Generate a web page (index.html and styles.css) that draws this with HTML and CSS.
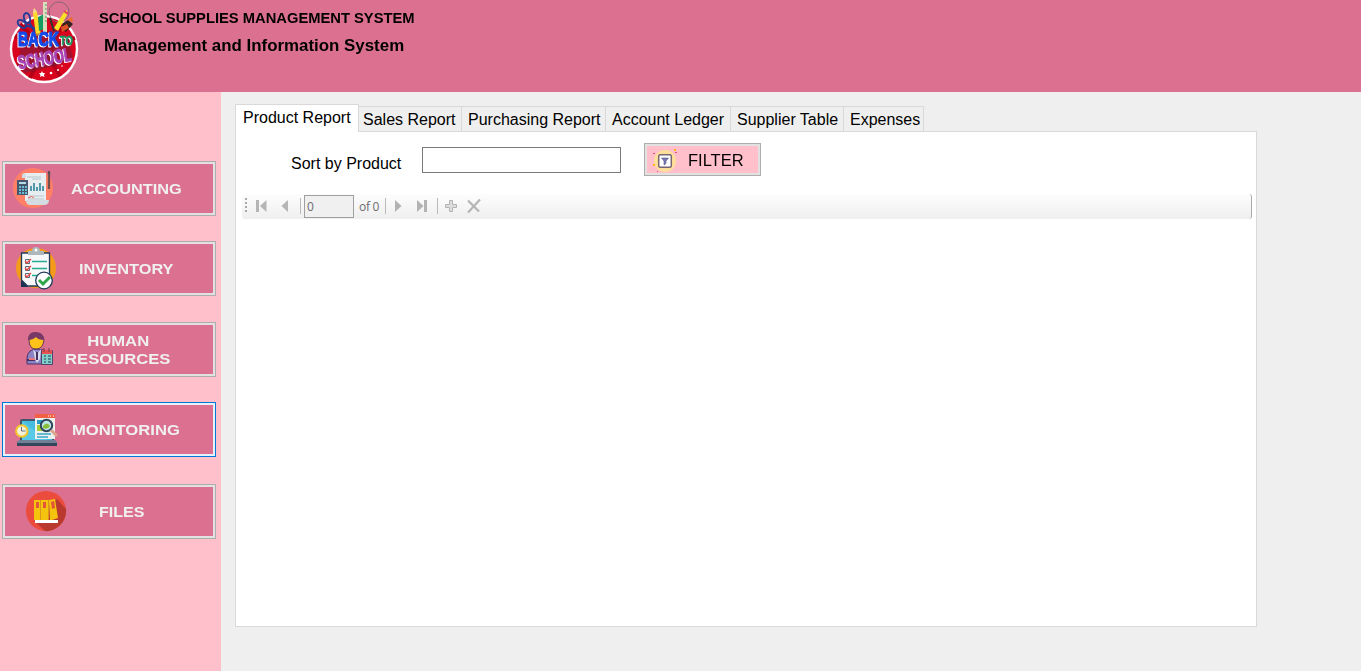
FILE: index.html
```html
<!DOCTYPE html>
<html lang="en">
<head>
<meta charset="utf-8">
<title>School Supplies Management System</title>
<link rel="stylesheet" href="styles.css">
</head>
<body>
<header class="header">
  <svg class="logo" viewBox="0 0 80 86" width="80" height="86">
    <circle cx="39" cy="49" r="33" fill="#d9051f" stroke="#fff" stroke-width="2.4"/>
    <path d="M39 49L10 36M39 49L15 24M39 49L60 24M39 49L70 38M39 49L25 78M39 49L55 76" stroke="#b60018" stroke-width="4"/>
    <g fill="none" stroke="#263c98" stroke-width="2"><ellipse cx="17" cy="24" rx="3" ry="5" transform="rotate(-50 17 24)"/><ellipse cx="22" cy="18" rx="3" ry="5" transform="rotate(-15 22 18)"/><path d="M20 25l12 4M24 22l6 10"/></g>
    <path d="M28 13l1-5 3 4 4 23-5 1z" fill="#ffd928"/><path d="M28 13l1-5 3 4z" fill="#f5d4a0"/>
    <path d="M33 17l6-3 3 14-8 3z" fill="#169b62"/><path d="M38 2h4v30h-4z" fill="#d9dfbd"/><path d="M40 5h2M40 9h2M40 13h2M40 17h2M40 21h2" stroke="#687"/>
    <circle cx="54" cy="12" r="10" fill="none" stroke="#8b6578" stroke-width="1"/><path d="M45 18l4 13" stroke="#333" stroke-width="2"/>
    <path d="M59 12l3-2 0 5-9 16-4-3z" fill="#f8e126"/><path d="M59 11l4 3" stroke="#e34261" stroke-width="2"/>
    <path d="M58 23l5-3 5 4-7 8-5-3z" fill="#38231f"/><path d="M62 20l5-3 1 5z" fill="#f06a25"/><path d="M56 27l6-3 2 4-7 4z" fill="#de5124"/>
    <path d="M14 37l38-7 1 12 14-5-2 10 3 10-14 8-34 8-8-7 3-12z" fill="#5a2440" opacity=".45"/>
    <g class="logo-word">
      <text class="logo-back" x="13" y="46" textLength="41" lengthAdjust="spacingAndGlyphs">BACK</text>
      <text class="logo-to" x="55" y="45" textLength="13" lengthAdjust="spacingAndGlyphs">TO</text>
      <text class="logo-school" x="14" y="69" textLength="54" lengthAdjust="spacingAndGlyphs" transform="rotate(-9 14 69)">SCHOOL</text>
    </g>
    <g fill="#fff"><path d="M37 71l1 2h2l-1 2 .5 2-2.500-1-2 1 .5-2-1.500-2h2z"/><circle cx="46" cy="73" r="1.300"/><circle cx="53" cy="70" r="1"/><circle cx="57" cy="66" r=".8"/></g>
  </svg>
  <div class="titles">
    <h1 class="title">SCHOOL SUPPLIES MANAGEMENT SYSTEM</h1>
    <h2 class="subtitle">Management and Information System</h2>
  </div>
</header>
<div class="body">
  <nav class="sidebar">
    <button class="nav accounting">
      <svg class="nav-icon" width="44" height="44" viewBox="0 0 44 44"><circle cx="22" cy="22" r="20" fill="#ff8067"/><path d="M14 7h21v28H14z" fill="#e8edef"/><path d="M14 7q-4 0-3 5h4zM15 34h23q0 5-5 5H19q-4 0-4-5" fill="#d3dce0"/><path d="M16 11h14M21 13h9M17 30h16M17 33h16" stroke="#b7c6cd"/><path d="M20 25v-5M23 25v-8M26 25v-4M29 25v-8M32 25v-5" stroke="#2e829a" stroke-width="1.600"/><path d="M17 32q4-3 6 0" stroke="#f35d50" fill="none"/><path d="M6 14h11v15H6z" fill="#46566c"/><path d="M8 16h7v2H8z" fill="#b6dce4"/><g fill="#67bdd2"><path d="M8 20h2v2H8zM11 20h2v2h-2zM14 20h2v2h-2zM8 23h2v2H8zM11 23h2v2h-2zM14 23h2v2h-2zM8 26h2v2H8zM11 26h2v2h-2zM14 26h2v2h-2z"/></g><path d="M38 5v18" stroke="#76504e" stroke-width="2.300"/><path d="M37 7h2" stroke="#344960"/></svg>
      <span class="label">ACCOUNTING</span>
    </button>
    <button class="nav inventory">
      <svg class="nav-icon" width="44" height="44" viewBox="0 0 44 44"><circle cx="23" cy="22" r="20" fill="#f49b1a"/><path d="M8.500 7h28v33h-22l-6-6z" fill="#f7f8fa" stroke="#203b5c" stroke-width="1.300"/><path d="M8 34l7 7H8z" fill="#173253"/><path d="M15 9V5h4q0-4 4-4t4 4h4v4z" fill="#adb7bd"/><circle cx="23" cy="4" r="1.500" fill="#fff"/><path d="M19 15.500h15M19 22.500h15M19 29.500h9" stroke="#24ad91" stroke-width="1.500"/><g fill="#e5eaec" stroke="#526a7b"><path d="M12.500 13.500h4v4h-4zM12.500 20.500h4v4h-4zM12.500 27.500h4v4h-4z"/></g><path d="M12 15l2 2 4-4M12 22l2 2 4-4M12 29l2 2 4-4" fill="none" stroke="#ed4c45" stroke-width="1.400"/><circle cx="31" cy="34.500" r="8.300" fill="#fff" stroke="#203b5c" stroke-width="1.300"/><path d="M26 34l4 4 7-7" fill="none" stroke="#2fa54c" stroke-width="3"/></svg>
      <span class="label">INVENTORY</span>
    </button>
    <button class="nav human">
      <svg class="nav-icon" width="30" height="36" viewBox="0 0 30 36"><path d="M2 33q-1-12 5-14l5-1 7 1 4 5v9z" fill="#8b83c4" stroke="#4a356b"/><path d="M4 9q0-7 7-7t8 7q-1 9-8 9T4 9" fill="#ffc21b" stroke="#633957"/><path d="M3 9q0-8 7-8 9 0 9 8-6 0-8-3-3 3-8 3" fill="#793967"/><path d="M8 18l4 5 4-5-1 10-3 4-2-4z" fill="#d9dced"/><path d="M12 21v8M2 29h8" stroke="#46305d" stroke-width="2"/><path d="M4 28h6" stroke="#e97777" stroke-width="2"/><path d="M16.500 19.500h11v14h-11z" fill="#80d1ca" stroke="#56416c"/><path d="M17 19h10v4H17z" fill="#e6534f"/><path d="M19 17v4M24 17v4" stroke="#753753"/><path d="M19 25h2M23 25h3M19 28h2M23 28h3M19 31h2M23 31h3" stroke="#446b80" stroke-width="1.300"/></svg>
      <span class="label two"><span class="line first">HUMAN</span><span class="line second">RESOURCES</span></span>
    </button>
    <button class="nav monitoring focused">
      <svg class="nav-icon" width="44" height="36" viewBox="0 0 44 36"><rect x="5" y="7" width="34" height="24" rx="2" fill="#44546a"/><path d="M7 9h30v19H7z" fill="#45bce0"/><path d="M7 9l25 19H7z" fill="#59c9e8"/><path d="M4 28h36l3 3H1z" fill="#718096"/><path d="M2 31h40v3H2z" fill="#34465c"/><path d="M20 2h20v25H20z" fill="#eef0ed"/><path d="M20 2h20v4H20z" fill="#f16045"/><path d="M33 4h1M35 4h1M38 4h1" stroke="#fff"/><path d="M22 8h5v4h-5z" fill="#249dc6"/><path d="M22 13h10v6H22z" fill="#a6cd33"/><path d="M22 22h14M22 25h11" stroke="#39a7c7" stroke-width="1.600"/><circle cx="31.500" cy="13.500" r="5.700" fill="#bde5e4" stroke="#30465b" stroke-width="2"/><path d="M28 14q4-5 7 0-2 4-7 2z" fill="#88bd3a"/><path d="M36 18l6 6" stroke="#dba58b" stroke-width="3"/><circle cx="6.800" cy="19" r="5.700" fill="#f4f2df" stroke="#f5c62b" stroke-width="2"/><path d="M6.500 15v4h4" fill="none" stroke="#697080"/></svg>
      <span class="label">MONITORING</span>
    </button>
    <button class="nav files">
      <svg class="nav-icon" width="44" height="44" viewBox="0 0 44 44"><circle cx="22" cy="22" r="20" fill="#ec4c3d"/><path d="M33 10l9 10q1 10-7 17-7 6-14 5L10 32z" fill="#ba392e"/><g fill="#f3c30d"><path d="M10 11h6v20h-6zM17 11h7v20h-7zM25 11l6-1 3 19-6 2h-2z"/></g><path d="M16.500 11v20M24.500 11v20" stroke="#dc941b"/><path d="M12 13h3v6h-3zM19 13h3v6h-3zM27 13l3-1 1 7-3 1z" fill="#e45439"/><path d="M11 31h23v3H11z" fill="#fff"/></svg>
      <span class="label">FILES</span>
    </button>
  </nav>
  <main class="content">
    <div class="tabs">
      <div class="tab active">Product Report</div><div class="tab sales">Sales Report</div><div class="tab purchasing">Purchasing Report</div><div class="tab ledger">Account Ledger</div><div class="tab supplier">Supplier Table</div><div class="tab expenses">Expenses</div>
    </div>
    <section class="panel">
      <div class="filters">
        <label class="sort" for="product">Sort by Product</label>
        <input class="product" id="product">
        <button class="filter">
          <svg class="filter-icon" width="26" height="26" viewBox="0 0 26 26"><circle cx="13" cy="13" r="11" fill="#ffdf99"/><rect x="6.700" y="6.700" width="12.600" height="12.600" rx="1.500" fill="#fff" stroke="#756575" stroke-width="1.500"/><path d="M9.500 10h7L14 13v2.500L12 17v-4z" fill="#7778b9" stroke="#625c82" stroke-width=".6"/><path d="M22 1h2v2h-2zM1 16h2v2H1z" fill="#ffb719"/><path d="M1 5h2v1H1zM23 4h2v1h-2zM5 23h1v1H5z" fill="#ee4d78"/></svg>
          <span class="filter-label">FILTER</span>
        </button>
      </div>
      <div class="toolbar">
        <svg class="tools" width="62" height="25" viewBox="0 0 62 25"><path d="M4 4v15" stroke="#a8a8a8" stroke-width="2" stroke-dasharray="2 2"/><path d="M14 6h3v12h-3zM24.500 6v12l-6.500-6zM46 6v12l-6.500-6z" fill="#b5b5b5"/><path d="M58.500 4v16" stroke="#b9b9b9"/></svg>
        <input class="page" value="0" aria-label="Page">
        <span class="count">of 0</span>
        <svg class="tools" width="110" height="25" viewBox="0 0 110 25"><path d="M3.500 4v16M55.500 4v16" stroke="#b9b9b9"/><path d="M13 6v12l6.500-6zM35 6v12l6.500-6zM42 6h3v12h-3z" fill="#b3b3b3"/><path d="M67.500 6.500h3v4h4v3h-4v4h-3v-4h-4v-3h4z" fill="#ddd" stroke="#b3b3b3"/><path d="M86 6.500l11 11M98 5.500l-12 13" stroke="#b5b5b5" stroke-width="2.200"/></svg>
      </div>
    </section>
  </main>
</div>
</body>
</html>
```

FILE: styles.css
```css
* { box-sizing: border-box; }
body { margin: 0; height: 671px; overflow: hidden; background: #efefef; color: #000; font-family: "Liberation Sans", Arial, sans-serif; }
button, input { margin: 0; font-family: inherit; border-radius: 0; }
.header { display: flex; height: 92px; padding-left: 5px; background: #db7090; }
.logo { display: block; flex: none; overflow: visible; }
.logo-word { font-family: "Liberation Sans", sans-serif; font-weight: bold; stroke-linejoin: round; filter: drop-shadow(-1px 1px 0 #fff); }
.logo-back { font-size: 20px; fill: #124bea; stroke: #124bea; stroke-width: 1.2px; }
.logo-to { font-size: 13px; fill: #159860; stroke: #159860; stroke-width: .6px; }
.logo-school { font-size: 19px; fill: #a844b4; stroke: #a844b4; stroke-width: 1px; }
.titles { padding: 9px 0 0 14px; }
.title, .subtitle { width: max-content; margin: 0; line-height: 18px; white-space: nowrap; transform-origin: left; }
.title { font-size: 14px; transform: scaleX(1.052); }
.subtitle { margin: 10px 0 0 5px; font-size: 16px; transform: scaleX(1.055); }
.body { display: flex; height: 579px; }
.sidebar { flex: none; width: 221px; padding: 69px 5px 0 2px; background: #ffc0cb; }
.nav { display: flex; align-items: center; width: 214px; height: 55px; padding: 0 0 1px; border: 1px solid #adadad; background: #db7090; box-shadow: inset 0 0 0 2px #e1e1e1; color: #f0f0f0; text-align: left; }
.focused { border-color: #0078d7; box-shadow: inset 0 0 0 2px #e5f1fb; }
.nav-icon { flex: none; display: block; }
.label { padding-top: 1px; font-size: 15px; font-weight: bold; line-height: 18px; transform: scaleX(1.09); transform-origin: left; }
.accounting .nav-icon { margin-left: 8px; }
.accounting .label { margin-left: 16px; }
.inventory { margin-top: 25px; }
.inventory .nav-icon { margin-left: 10px; }
.inventory .label { margin-left: 22px; }
.human { margin-top: 26px; }
.human .nav-icon { margin-left: 22px; }
.human .label { margin-left: 10px; transform: scaleX(1.11); }
.line { display: block; }
.first { padding-left: 20px; }
.monitoring { margin-top: 25px; }
.monitoring .nav-icon { margin: 1px 0 0 12px; }
.monitoring .label { margin-left: 13px; transform: scaleX(1.11); }
.files { margin-top: 27px; }
.files .nav-icon { margin-left: 21px; }
.files .label { margin-left: 31px; transform: scaleX(1.07); }
.content { padding: 12px 0 0 14px; }
.tabs { display: flex; align-items: flex-end; height: 27px; font-size: 16px; white-space: nowrap; }
.tab { height: 25px; padding-left: 5px; border: 1px solid #d9d9d9; border-width: 1px 1px 0 0; line-height: 25px; }
.active { z-index: 1; width: 124px; height: 28px; margin-bottom: -1px; padding-left: 7px; border-left-width: 1px; background: #fff; line-height: 25px; }
.sales { width: 103px; padding-left: 4px; }
.purchasing { width: 144px; padding-left: 6px; }
.ledger { width: 125px; padding-left: 6px; }
.supplier { width: 113px; padding-left: 6px; }
.expenses { width: 80px; padding-left: 6px; }
.panel { width: 1022px; height: 496px; border: 1px solid #d9d9d9; background: #fff; }
.filters { display: flex; align-items: flex-start; height: 62px; padding: 11px 0 0 55px; }
.sort { width: 131px; padding-top: 12px; font-size: 16px; line-height: 18px; }
.product { width: 199px; height: 26px; margin-top: 4px; padding: 0 4px; border: 1px solid #7a7a7a; background: #fff; }
.filter { display: flex; align-items: center; width: 117px; height: 33px; margin-left: 23px; padding: 0; border: 1px solid #adadad; background: #ffc0cb; box-shadow: inset 0 0 0 2px #e1e1e1; color: #000; }
.filter-icon { margin: 2px 0 0 7px; }
.filter-label { margin-left: 10px; padding-top: 2px; font-size: 16px; line-height: 18px; transform: scaleX(1.03); transform-origin: left; }
.toolbar { display: flex; align-items: center; width: 1010px; height: 25px; margin-left: 6px; border-right: 1px solid #aaa; border-radius: 3px; background: linear-gradient(#fdfdfd, #efefef); }
.tools { display: block; flex: none; }
.page { width: 50px; height: 23px; padding: 0 2px 1px; border: 1px solid #a0a0a0; background: #f0f0f0; color: #6d6d6d; font: 12px "Open Sans", sans-serif; }
.count { width: 23px; margin: 0 0 1px 5px; color: #6d6d6d; font: 12px "Open Sans", sans-serif; letter-spacing: -.3px; white-space: nowrap; }
```
